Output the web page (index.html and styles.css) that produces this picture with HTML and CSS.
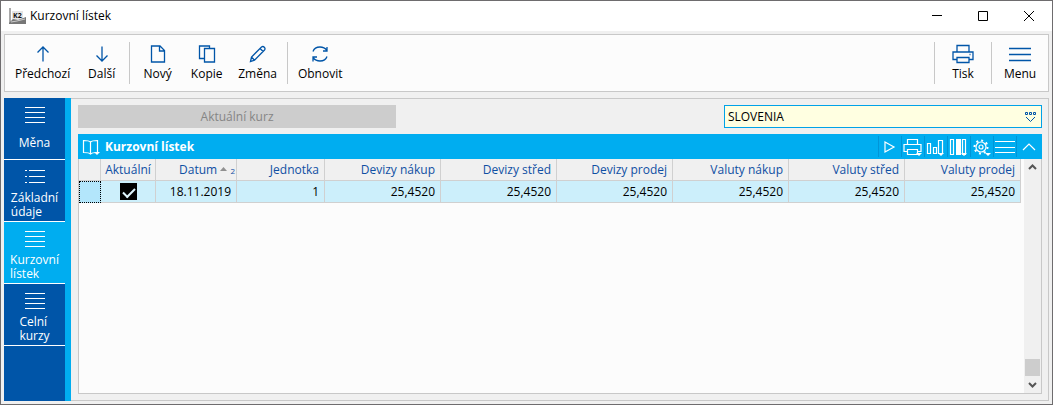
FILE: index.html
```html
<!DOCTYPE html>
<html lang="cs">
<head>
  <meta charset="UTF-8">
  <meta name="viewport" content="width=device-width, initial-scale=1.0">
  <title>Kurzovní lístek</title>
  <link rel="stylesheet" href="styles.css">
</head>
<body>
  <div class="window">
    <header class="titlebar">
      <svg class="logo" width="17" height="17" viewBox="0 0 17 17">
        <path d="M0 0h2v15H0z" fill="#a9a9a9"/>
        <path d="M3 3h11v9H3z" fill="#e4e4e4"/>
        <path d="M0 15l4-4 5 1 8-3v7H0z" fill="#777"/>
        <path d="M2 14l6-1 8-2" stroke="#ccc" fill="none"/>
        <text x="4" y="10" class="logo-text">K2</text>
      </svg>
      <h1>Kurzovní lístek</h1>
      <div class="window-buttons">
        <button type="button" aria-label="Minimalizovat">
          <svg width="12" height="12" viewBox="0 0 12 12"><path d="M1 5.500h10"/></svg>
        </button>
        <button type="button" aria-label="Maximalizovat">
          <svg width="12" height="12" viewBox="0 0 12 12"><path d="M1.500 1.500h9v9h-9z"/></svg>
        </button>
        <button type="button" aria-label="Zavřít">
          <svg width="12" height="12" viewBox="0 0 12 12"><path d="M1 1l10 10M11 1L1 11"/></svg>
        </button>
      </div>
    </header>

    <nav class="toolbar">
      <div class="group">
        <button type="button">
          <svg width="22" height="20" viewBox="0 0 22 20"><path d="M11 17.500V3.500M5.500 8.500L11 3l5.500 5.500"/></svg>
          Předchozí
        </button>
        <button type="button">
          <svg width="22" height="20" viewBox="0 0 22 20"><path d="M11 2.500v14M5.500 11.500L11 17l5.500-5.500"/></svg>
          Další
        </button>
      </div>
      <div class="group">
        <button type="button">
          <svg width="22" height="20" viewBox="0 0 22 20"><path d="M4.500 2h8.500l4.500 4.500V18h-13zM12.500 2v5h5"/></svg>
          Nový
        </button>
        <button type="button">
          <svg width="22" height="20" viewBox="0 0 22 20"><path d="M8.500 14.500h-5v-12.500h10v2.500M8.500 4.500h10v13.500h-10z"/></svg>
          Kopie
        </button>
        <button type="button">
          <svg width="22" height="20" viewBox="0 0 22 20"><path d="M3.500 17.500l1-4.500L14.500 3c2-1.500 4.500 1 3 3L7.500 16.200zM4.500 13l3 3.200M13 4.500l3.200 3"/></svg>
          Změna
        </button>
      </div>
      <div class="group">
        <button type="button">
          <svg width="22" height="20" viewBox="0 0 22 20"><path d="M4 7.500c1-3 3.500-4.500 7-4.500s5.500 1.500 7 3.500M18 3v4h-4M18 12.500c-1 3-3.500 4.500-7 4.500s-5.500-1.500-7-3.500M4 17.500v-4.500h4"/></svg>
          Obnovit
        </button>
      </div>
      <div class="group right">
        <button type="button">
          <svg width="22" height="20" viewBox="0 0 22 20"><path d="M4.500 15.500h-3.500v-7.500h20v7.500h-3.500M5 8V1.500h12V8M5 13.500h12v5H5z"/><path d="M17.500 10.500h1"/></svg>
          Tisk
        </button>
      </div>
      <div class="group">
        <button type="button">
          <svg width="22" height="20" viewBox="0 0 22 20"><path d="M0 4.500h22M0 10.500h22M0 16.500h22"/></svg>
          Menu
        </button>
      </div>
    </nav>

    <div class="main">
      <nav class="sidebar">
        <a href="#mena">
          <svg width="20" height="18" viewBox="0 0 20 18"><path d="M0 1.500h20M0 6.500h20M0 11.500h20M0 16.500h20"/></svg>
          <span>Měna</span>
        </a>
        <a href="#udaje">
          <svg width="20" height="18" viewBox="0 0 20 18"><path d="M0 2.500h2M4 2.500h16M0 8.500h2M4 8.500h16M0 14.500h2M4 14.500h16"/></svg>
          <span>Základní<br>údaje</span>
        </a>
        <a href="#listek" class="active">
          <svg width="20" height="18" viewBox="0 0 20 18"><path d="M0 1.500h20M0 6.500h20M0 11.500h20M0 16.500h20"/></svg>
          <span>Kurzovní<br>lístek</span>
        </a>
        <a href="#kurzy">
          <svg width="20" height="18" viewBox="0 0 20 18"><path d="M0 1.500h20M0 6.500h20M0 11.500h20M0 16.500h20"/></svg>
          <span>Celní<br>kurzy</span>
        </a>
      </nav>

      <main class="content">
        <div class="filters">
          <button type="button" class="current-rate" disabled>Aktuální kurz</button>
          <div class="country">
            <select aria-label="Země">
              <option>SLOVENIA</option>
            </select>
            <svg width="14" height="12" viewBox="0 0 14 12"><path d="M1.500 1.500h2v2h-2zM5.500 1.500h2v2h-2zM9.500 1.500h2v2h-2zM2 6l4.500 4.500L11 6"/></svg>
          </div>
        </div>

        <section class="grid">
          <div class="grid-title">
            <svg width="18" height="18" viewBox="0 0 18 18"><path d="M8.500 4c-1.500-1.500-4-1.500-7-1.500v12c3 0 5.500 0 7 1.500 1.500-1.500 4-1.500 7-1.500v-12c-3 0-5.500 0-7 1.500zM8.500 4v12"/><path class="solid" d="M12 14h6l-3 3z"/></svg>
            <h2>Kurzovní lístek</h2>
            <div class="grid-tools">
              <button type="button" aria-label="Spustit">
                <svg width="20" height="20" viewBox="0 0 20 20"><path d="M5 5l9 5-9 5z"/></svg>
              </button>
              <button type="button" aria-label="Tisk">
                <svg width="20" height="20" viewBox="0 0 20 20"><path d="M4.500 14.500h-3.500v-7h17v7h-3.500M4.500 7.500v-5h10v5M4.500 12.500h10v5h-10z"/><path class="solid" d="M13 16h6l-3 3z"/></svg>
              </button>
              <button type="button" aria-label="Graf">
                <svg width="20" height="20" viewBox="0 0 20 20"><path d="M1.500 6.500h3v10h-3zM7.500 10.500h3v6h-3zM12.500 3.500h4v13h-4z"/><path class="solid" d="M12 16h6l-3 3z"/></svg>
              </button>
              <button type="button" aria-label="Sloupce">
                <svg width="20" height="20" viewBox="0 0 20 20"><path d="M1.500 2.500h3v15h-3zM13.500 2.500h3v15h-3z"/><path class="solid" d="M7 2h5v16H7zM12 16h6l-3 3z"/></svg>
              </button>
              <button type="button" aria-label="Nastavení">
                <svg width="20" height="20" viewBox="0 0 20 20"><circle cx="9" cy="10" r="5"/><circle cx="9" cy="10" r="2"/><circle class="teeth" cx="9" cy="10" r="6.500"/><path class="solid" d="M13 16h6l-3 3z"/></svg>
              </button>
              <button type="button" aria-label="Nabídka">
                <svg width="20" height="20" viewBox="0 0 20 20"><path d="M0 4.500h20M0 10.500h20M0 15.500h20"/></svg>
              </button>
              <button type="button" class="collapse" aria-label="Sbalit">
                <svg width="20" height="20" viewBox="0 0 20 20"><path d="M3 13l6-6 6 6"/></svg>
              </button>
            </div>
          </div>

          <div class="grid-body">
            <div class="table-area">
              <table>
                <colgroup>
                  <col class="col-mark">
                  <col class="col-current">
                  <col class="col-date">
                  <col class="col-unit">
                  <col span="6">
                </colgroup>
                <thead>
                  <tr>
                    <th></th>
                    <th class="center">Aktuální</th>
                    <th class="sorted">Datum <svg width="7" height="4" viewBox="0 0 7 4"><path d="M0 4L3.500 0 7 4z"/></svg> <small>2</small></th>
                    <th>Jednotka</th>
                    <th>Devizy nákup</th>
                    <th>Devizy střed</th>
                    <th>Devizy prodej</th>
                    <th>Valuty nákup</th>
                    <th>Valuty střed</th>
                    <th>Valuty prodej</th>
                  </tr>
                </thead>
                <tbody>
                  <tr>
                    <td class="mark"></td>
                    <td class="center"><input type="checkbox" aria-label="Aktuální" checked></td>
                    <td>18.11.2019</td>
                    <td>1</td>
                    <td>25,4520</td>
                    <td>25,4520</td>
                    <td>25,4520</td>
                    <td>25,4520</td>
                    <td>25,4520</td>
                    <td>25,4520</td>
                  </tr>
                </tbody>
              </table>
            </div>
            <div class="scrollbar">
              <button type="button" aria-label="Nahoru">
                <svg width="9" height="9" viewBox="0 0 9 9"><path d="M1 6l3.500-3.500L8 6"/></svg>
              </button>
              <div class="thumb"></div>
              <button type="button" aria-label="Dolů">
                <svg width="9" height="9" viewBox="0 0 9 9"><path d="M1 3l3.500 3.500L8 3"/></svg>
              </button>
            </div>
          </div>
        </section>
      </main>
    </div>
  </div>
</body>
</html>
```
FILE: styles.css
```css
* {
  box-sizing: border-box;
}

body {
  margin: 0;
  font-family: "Open Sans", "Noto Sans", sans-serif;
  font-size: 12px;
  line-height: 16px;
  color: #000;
}

button {
  padding: 0;
  border: 0;
  background: none;
  font: inherit;
  color: inherit;
}

svg {
  display: block;
  flex: none;
  fill: none;
  stroke: currentColor;
}

.window {
  display: flex;
  flex-direction: column;
  height: 100vh;
  border: 1px solid #6e6c6e;
  background-color: #f0f0f0;
}

/* title bar */
.titlebar {
  display: flex;
  align-items: center;
  height: 30px;
  padding-left: 8px;
  background-color: #fff;
}

.titlebar h1 {
  margin: 0 0 0 4px;
  font-size: 12px;
  font-weight: normal;
}

.logo {
  stroke: none;
}

.logo-text {
  font-size: 7px;
  font-weight: bold;
  fill: #111;
}

.window-buttons {
  display: flex;
  margin-left: auto;
}

.window-buttons button {
  display: flex;
  align-items: center;
  justify-content: center;
  width: 46px;
  height: 30px;
}

/* toolbar */
.toolbar {
  display: flex;
  align-items: center;
  height: 58px;
  margin: 3px 3px 6px;
  border: 1px solid #c8c8c8;
  background-color: #fcfcfc;
}

.group {
  display: flex;
  height: 42px;
  padding: 0 3px;
}

.group + .group {
  border-left: 1px solid #c8c8c8;
}

.group.right {
  margin-left: auto;
}

.toolbar button {
  display: flex;
  flex-direction: column;
  align-items: center;
  gap: 2px;
  min-width: 49px;
  padding: 2px 7px 0;
}

.right button,
.right + .group button {
  min-width: 50px;
}

.toolbar svg {
  color: #0055a8;
  stroke-width: 1.3;
}

/* main area */
.main {
  display: flex;
  flex: 1;
  min-height: 0;
  margin: 0 3px 3px;
}

.sidebar {
  flex: none;
  width: 67px;
  border-right: 6px solid #00adf0;
  background-color: #0055a8;
}

.sidebar a {
  display: flex;
  flex-direction: column;
  align-items: center;
  height: 62px;
  padding-top: 8px;
  border-bottom: 1px solid #fff;
  color: #fff;
  line-height: 14px;
  text-decoration: none;
}

.sidebar span {
  display: flex;
  flex: 1;
  align-items: center;
  padding-top: 2px;
}

.sidebar .active {
  background-color: #00adf0;
}

.content {
  display: flex;
  flex: 1;
  flex-direction: column;
  gap: 6px;
  min-width: 0;
  padding: 6px 6px 6px 7px;
  border: 1px solid #c8c8c8;
  border-left: 0;
}

.filters {
  display: flex;
  justify-content: space-between;
}

.current-rate {
  width: 33%;
  height: 23px;
  background-color: #cdcdcd;
  color: #858585;
}

.country {
  position: relative;
  width: 33%;
}

.country select {
  width: 100%;
  height: 23px;
  padding: 1px 3px 0;
  border: 1px solid #00a2e8;
  border-radius: 0;
  appearance: none;
  background-color: #ffffe1;
  color: #000;
  font: inherit;
}

.country svg {
  position: absolute;
  top: 6px;
  right: 4px;
  color: #0055a8;
  pointer-events: none;
}

/* data grid */
.grid {
  display: flex;
  flex: 1;
  flex-direction: column;
}

.grid-title {
  display: flex;
  align-items: center;
  height: 25px;
  padding-left: 4px;
  background-color: #00adf0;
  color: #fff;
}

.grid-title h2 {
  margin: 0 0 0 5px;
  font-size: 12px;
}

.grid-title svg {
  stroke-width: 1.2;
}

.grid-title .solid {
  fill: #fff;
  stroke: none;
}

.grid-title .teeth {
  stroke-width: 2;
  stroke-dasharray: 2 3;
}

.grid-tools {
  display: flex;
  margin-left: auto;
}

.grid-tools button {
  width: 23px;
  height: 21px;
  padding-left: 1px;
  border-left: 1px solid #0095d8;
}

.grid-tools .collapse {
  width: 26px;
  padding-left: 3px;
}

.grid-body {
  display: flex;
  flex: 1;
  border: 1px solid #c8c8c8;
  border-top: 0;
  background-color: #fcfcfc;
}

.table-area {
  flex: 1;
  padding-right: 3px;
}

table {
  width: 100%;
  border-spacing: 0;
  table-layout: fixed;
}

.col-mark {
  width: 22px;
}

.col-current {
  width: 55px;
}

.col-date {
  width: 81px;
}

.col-unit {
  width: 88px;
}

th,
td {
  height: 22px;
  padding: 1px 5px 0 0;
  border-right: 1px solid #d0d0d0;
  border-bottom: 1px solid #d0d0d0;
  text-align: right;
  white-space: nowrap;
}

th {
  background-color: #f0f0f0;
  color: #0f4fa3;
  font-weight: normal;
}

th svg {
  display: inline-block;
  vertical-align: 3px;
  fill: #909090;
  stroke: none;
}

th.sorted {
  padding-right: 1px;
}

th small {
  font-size: 8px;
}

td {
  background-color: #cceffb;
}

.center {
  padding: 0;
  text-align: center;
}

.mark {
  border: 1px dotted #000;
  background-color: #b3e6fb;
}

input[type="checkbox"] {
  display: block;
  width: 17px;
  height: 17px;
  margin: 0 auto;
  appearance: none;
  background-color: #000;
}

input[type="checkbox"]:checked::before {
  content: "";
  display: block;
  width: 10px;
  height: 5px;
  margin: 5px 0 0 3px;
  border-bottom: 2px solid #dff5fd;
  border-left: 2px solid #dff5fd;
  transform: rotate(-45deg);
}

.scrollbar {
  display: flex;
  flex-direction: column;
  width: 17px;
  background-color: #f0f0f0;
  color: #555;
}

.scrollbar button {
  display: flex;
  align-items: center;
  justify-content: center;
  height: 17px;
}

.scrollbar svg {
  stroke-width: 2;
}

.scrollbar .thumb {
  width: 15px;
  height: 17px;
  margin: auto auto 0;
  background-color: #cdcdcd;
}
```
